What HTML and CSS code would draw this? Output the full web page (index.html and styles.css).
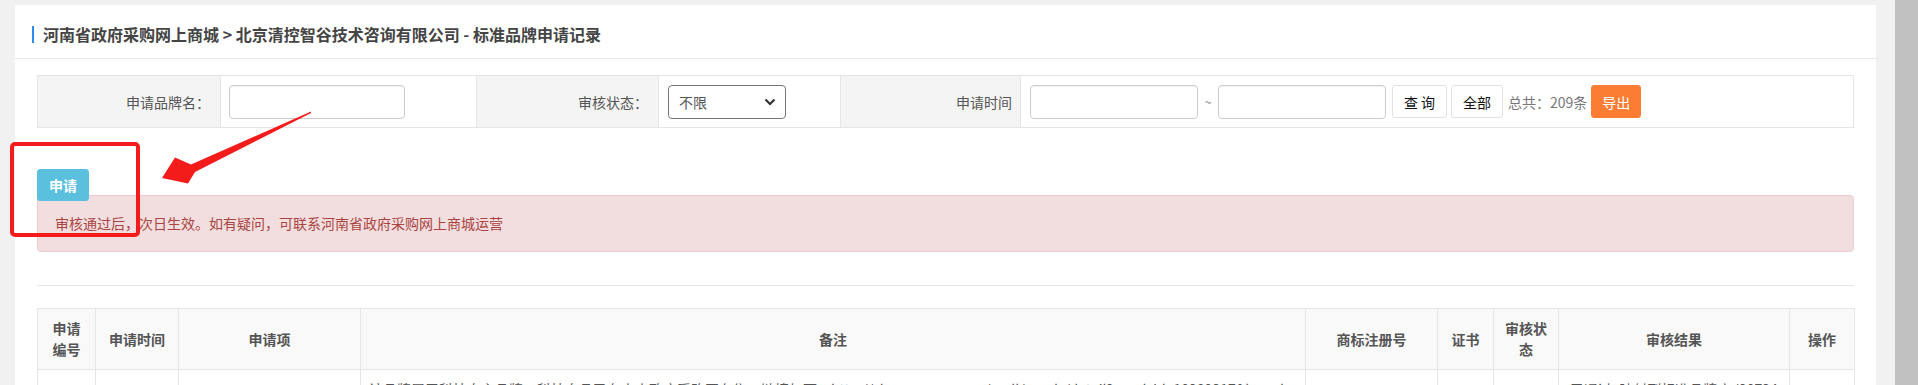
FILE: index.html
```html
<!DOCTYPE html>
<html lang="zh-CN">
<head>
<meta charset="utf-8">
<title>标准品牌申请记录</title>
<link rel="stylesheet" href="styles.css">
</head>
<body>
<div class="page">
  <div class="panel">
    <div class="title"><span class="bar"></span>河南省政府采购网上商城 &gt; 北京清控智谷技术咨询有限公司 - 标准品牌申请记录</div>
    <div class="content">
      <table class="filter">
        <colgroup>
          <col class="c-l1"><col class="c-i1"><col class="c-l2"><col class="c-i2"><col class="c-l3"><col>
        </colgroup>
        <tr>
          <td class="lab">申请品牌名：</td>
          <td class="fld"><input class="inp inp-name" type="text"></td>
          <td class="lab">审核状态：</td>
          <td class="fld">
            <div class="sel"><span>不限</span>
              <svg class="chev" width="12" height="8" viewBox="0 0 12 8"><path d="M1.5 1.5 L6 6 L10.5 1.5" fill="none" stroke="#333" stroke-width="2.2"/></svg>
            </div>
          </td>
          <td class="lab lab3">申请时间</td>
          <td class="fld">
            <div class="range">
              <input class="inp inp-date" type="text">
              <span class="tilde">~</span>
              <input class="inp inp-date" type="text">
              <button class="btn btn-plain btn-q">查 询</button>
              <button class="btn btn-plain btn-all">全部</button>
              <span class="total">总共：209条</span>
              <button class="btn btn-export">导出</button>
            </div>
          </td>
        </tr>
      </table>
      <div class="actions"><button class="btn btn-apply">申请</button></div>
      <div class="alert">审核通过后，次日生效。如有疑问，可联系河南省政府采购网上商城运营</div>
      <div class="sep"></div>
      <table class="data">
        <colgroup>
          <col class="d1"><col class="d2"><col class="d3"><col class="d4"><col class="d5"><col class="d6"><col class="d7"><col class="d8"><col class="d9">
        </colgroup>
        <thead>
          <tr>
            <th>申请<br>编号</th>
            <th>申请时间</th>
            <th>申请项</th>
            <th>备注</th>
            <th>商标注册号</th>
            <th>证书</th>
            <th>审核状<br>态</th>
            <th>审核结果</th>
            <th>操作</th>
          </tr>
        </thead>
        <tbody>
          <tr>
            <td>1077</td>
            <td>24-11-21</td>
            <td></td>
            <td class="left">该品牌属于科技自主品牌，科技自品已在中山政府采购网有售，链接如下：http://shop.zsgp.gov.cn/mall/goods/detail?goodsId=10289317&amp;brand=%E6%B8%85%E6%8E%A7</td>
            <td></td>
            <td><a class="link" href="#">查看</a></td>
            <td>已通过</td>
            <td>已通过: 映射到标准品牌库 (207348)</td>
            <td></td>
          </tr>
        </tbody>
      </table>
    </div>
  </div>
  <div class="scroll"><div class="thumb"></div></div>
</div>
<div class="mark-box"></div>
<svg class="mark-arrow" width="330" height="200" viewBox="0 0 330 200">
  <polygon points="311,111.5 191,164.5 175,157.5 162,178 188,183.5 195,172 311,113" fill="#f41b1b"/>
</svg>
</body>
</html>
```
FILE: styles.css
```css
html, body {
  margin: 0;
  padding: 0;
  height: 385px;
  overflow: hidden;
  background: #f1f1f1;
  font-family: "Noto Sans CJK SC", "Noto Sans", sans-serif;
  font-size: 14px;
  color: #555;
}

.page {
  display: flex;
  height: 385px;
  padding-left: 15px;
  box-sizing: border-box;
}

.panel {
  flex: none;
  width: 1861px;
  margin-top: 5px;
  background: #fff;
}

.scroll {
  flex: none;
  width: 23px;
  margin-left: 19px;
  height: 385px;
  background: #f1f1f1;
}
.thumb {
  height: 100%;
  background: #c1c1c1;
}

.title {
  display: flex;
  align-items: center;
  padding: 19px 0 14px 17px;
  line-height: 20px;
  font-size: 16px;
  font-weight: bold;
  color: #444;
  border-bottom: 1px solid #e8e8e8;
}
.bar {
  width: 2px;
  height: 17px;
  background: #2d8cf0;
  margin-right: 9px;
}

.content {
  padding: 0 22px;
}

/* filter table */
.filter {
  width: 100%;
  margin-top: 16px;
  border-collapse: collapse;
  table-layout: fixed;
  border: 1px solid #e6e6e6;
}
.c-l1 { width: 183px; }
.c-i1 { width: 256px; }
.c-l2 { width: 182px; }
.c-i2 { width: 182px; }
.c-l3 { width: 180px; }
.filter td {
  height: 51px;
  padding: 0;
  border: 1px solid #e6e6e6;
}
.filter .lab {
  background: #f4f4f4;
  text-align: right;
  padding-right: 10px;
  color: #555;
  line-height: 20px;
}
.filter .lab3 { padding-right: 8px; }
.filter .fld {
  padding-left: 8px;
}
.inp {
  box-sizing: border-box;
  height: 34px;
  border: 1px solid #ccc;
  border-radius: 4px;
  box-shadow: inset 0 1px 1px rgba(0,0,0,0.06);
  padding: 0 8px;
  font: inherit;
  display: block;
  background: #fff;
}
.inp-name { width: 176px; }
.inp-date { width: 168px; }

.sel {
  box-sizing: border-box;
  width: 118px;
  height: 34px;
  margin-left: 1px;
  border: 1px solid #767676;
  border-radius: 4px;
  display: flex;
  align-items: center;
  justify-content: space-between;
  padding: 0 9px 0 10px;
  color: #555;
  font-size: 14px;
}
.chev { display: block; }

.range {
  display: flex;
  align-items: center;
  padding-left: 1px;
}
.tilde {
  width: 20px;
  text-align: center;
  color: #777;
  font-size: 12px;
}
.btn {
  box-sizing: border-box;
  height: 33px;
  border-radius: 3px;
  font: inherit;
  font-size: 14px;
  padding: 0;
  cursor: pointer;
}
.btn-plain {
  background: #fff;
  border: 1px solid #e2e2e2;
  color: #111;
}
.btn-q { width: 55px; margin-left: 6px; }
.btn-all { width: 52px; margin-left: 4px; }
.total {
  margin-left: 5px;
  color: #777;
  white-space: nowrap;
}
.btn-export {
  width: 50px;
  margin-left: 4px;
  background: #fa7d33;
  border: 1px solid #fa7d33;
  color: #fff;
}

.actions {
  margin-top: 41px;
  margin-bottom: -6px;
  display: flex;
}
.btn-apply {
  position: relative;
  z-index: 1;
  width: 52px;
  height: 32px;
  background: #5bc0de;
  border: 1px solid #5bc0de;
  color: #fff;
  font-weight: bold;
}

.alert {
  background: #f2dede;
  border: 1px solid #ebccd1;
  border-radius: 4px;
  color: #a94442;
  padding: 17px 17px;
  line-height: 21px;
  font-size: 14px;
}

.sep {
  margin-top: 33px;
  border-top: 1px solid #e6e6e6;
}

/* data table */
.data {
  width: 100%;
  margin-top: 22px;
  border-collapse: collapse;
  table-layout: fixed;
  border: 1px solid #e6e6e6;
}
.d1 { width: 58px; }
.d2 { width: 83px; }
.d3 { width: 182px; }
.d4 { width: 945px; }
.d5 { width: 132px; }
.d6 { width: 56px; }
.d7 { width: 65px; }
.d8 { width: 231px; }
.d9 { width: 65px; }
.data th {
  background: #f9f9f9;
  font-weight: bold;
  color: #555;
  line-height: 21px;
  padding: 9px 4px;
  border: 1px solid #e6e6e6;
  text-align: center;
  vertical-align: middle;
}
.data td {
  padding: 9px 8px;
  line-height: 21px;
  border: 1px solid #e6e6e6;
  text-align: center;
  vertical-align: middle;
  color: #555;
  word-break: break-all;
}
.data td.left { text-align: left; }
.link { color: #337ab7; text-decoration: none; }

/* annotation overlays */
.mark-box {
  position: absolute;
  left: 10px;
  top: 142px;
  width: 130px;
  height: 95px;
  box-sizing: border-box;
  border: 4px solid #f41b1b;
  border-radius: 5px;
}
.mark-arrow {
  position: absolute;
  left: 0;
  top: 0;
}
```
